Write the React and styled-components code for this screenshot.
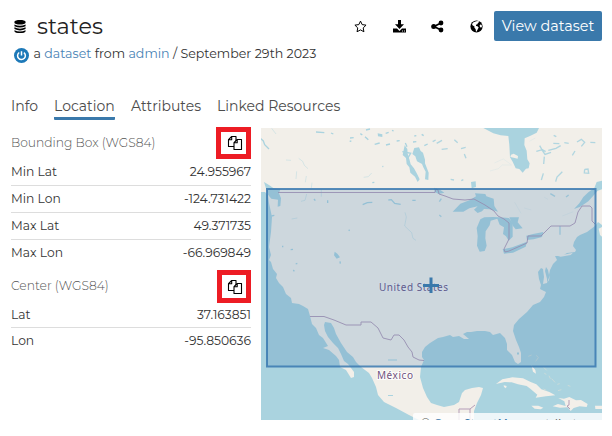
import React from "react";
import styled, { createGlobalStyle } from "styled-components";

const Global = createGlobalStyle`
  * { box-sizing: border-box; }
  body { margin: 0; background: #fff; color: #333; font-family: Montserrat, Inter, "Open Sans", sans-serif; }
`;
const Page = styled.main`
  width: 612px; height: 436px; padding: 11px 10px 0 11px; overflow: hidden;
`;
const Header = styled.header`
  display: flex; height: 30px; align-items: center;
`;
const Title = styled.h1`
  margin: 0 auto 0 11px; font-size: 22.4px; line-height: 30px; font-weight: 400; color: #222;
`;
const Glyph = styled.svg`
  display: block; flex: none; overflow: visible; width: ${(p) => p.$w}px; height: ${(p) => p.$h}px;
  margin-left: ${(p) => p.$left || 0}px; fill: ${(p) => p.$fill || "#000"};
`;
const Actions = styled.div`
  display: flex; align-items: center; gap: 25.5px; margin-right: 12.5px;
`;
const Action = styled.button`
  border: 0; padding: 0; background: none; width: 13px; height: 14px;
`;
const Primary = styled.button`
  width: 108px; height: 30px; border: 0; border-radius: 2px; padding: 0; margin-right: -1px; background: #3a79ab; color: #fff;
  font: 400 14.4px Montserrat, Inter, sans-serif; white-space: nowrap;
  transform: translateX(-1px);
`;
const Byline = styled.div`
  display: flex; align-items: center; height: 20px; margin: 4px 0 0 3px; font-size: 12.6px; white-space: pre;
`;
const BylineText = styled.span`
  margin: 0 0 2px 4.5px; line-height: 18px;
`;
const Link = styled.a`color: #4a83b5;`;
const Tabs = styled.nav`
  display: flex; gap: 16px; margin-top: 31px; height: 24px;
`;
const Tab = styled.a`
  width: ${(p) => p.$w}px; height: 24px; line-height: 20px; font-size: 14px; font-weight: 400; color: #4c4c4c; white-space: nowrap;
  border-bottom: 3px solid ${(p) => (p.$active ? "#3a79ab" : "transparent")};
  border-radius: 1px;
`;
const Body = styled.section`
  display: flex; gap: 10px; margin-top: 8px;
`;
const Facts = styled.div`width: 240px; flex: none;`;
const GroupHead = styled.div`
  display: flex; justify-content: space-between; align-items: center; height: ${(p) => p.$h}px; margin-top: ${(p) => p.$top}px;
  font-size: 12.3px; font-weight: 300; color: #555;
`;
const GroupTitle = styled.span`padding-bottom: 2px; letter-spacing: -0.02px;`;
const CopyButton = styled.button`
  display: flex; align-items: center; justify-content: center; width: ${(p) => p.$w}px; height: ${(p) => p.$h}px;
  border: 5px solid #ed1c24; padding: 0 0 0 2px; background: #fff;
`;
const Row = styled.div`
  display: flex; justify-content: space-between; align-items: center; height: ${(p) => p.$h || 27}px; font-size: 12.3px;
  padding-bottom: 1px; border-bottom: 1px solid ${(p) => (p.$last ? "transparent" : "#ddd")};
`;
const Cell = styled.span`white-space: nowrap;`;
const MapView = styled.svg`display: block; width: 341px; height: 292px; flex: none;`;

const Copy = () => (
  <Glyph $w={14} $h={14} $fill="#fff" viewBox="0 0 14 14">
    <g stroke="#000" strokeWidth="1.1" strokeLinejoin="round">
      <path d="M3.7.5H8v10H.5V3.7zM3.7.5v3.2H.5" />
      <path d="M9.2 3.5h4.3v10H6V6.7zM9.2 3.5v3.2H6" />
    </g>
  </Glyph>
);

const rowsBox = [["Min Lat", "24.955967"], ["Min Lon", "-124.731422"], ["Max Lat", "49.371735"], ["Max Lon", "-66.969849"]];
const rowsCenter = [["Lat", "37.163851", 25], ["Lon", "-95.850636"]];

const Rows = ({ items }) => items.map(([label, value, h], i) => (
  <Row key={label} $h={h} $last={i === items.length - 1}><Cell>{label}</Cell><Cell>{value}</Cell></Row>
));

const MapPanel = () => (
  <MapView viewBox="261 128 341 292" fill="#aad3df">
    <rect x="261" y="128" width="341" height="292" />
    <path fill="#f2efe9" d="M261 128H602V225L598 222 595 226 587 232 580 235 577 237 574 242 573 246 576 250 575 252 567 253 562 256 555 256 557 260 553 264 550 270 549 275 548 270 546 267 545 271 547 279 547 283 550 275 551 270 549 280 547 283 543 284 544 277 543 269 541 268 538 272 539 279 541 285 540 289 546 292 544 297 540 302 533 305 527 312 519 319 514 325 513 331 516 340 519 347 521 353 521 362 518 364 515 362 512 355 507 350 507 344 505 338 500 333 493 335 490 332 485 331 477 331 471 332 467 332 463 334 469 339 464 339 459 336 453 337 450 335 443 337 438 338 430 343 425 347 422 352 422 357 424 360 421 367 420 377 423 388 427 397 431 403 437 405 444 407 454 405 459 402 462 393 465 390 472 388 479 387 483 388 481 395 477 403 474 411 474 420H419L409 415 396 408 384 402 378 395 376 387 372 378 369 373 361 367 356 362 353 357 347 352 341 343 336 334 334 328 331 323 325 322 324 325 325 331 328 337 333 343 338 348 341 354 344 361 348 364 354 372 354 377 351 378 346 370 340 367 339 360 336 356 329 350 323 348 328 346 323 338 319 335 316 328 312 324 310 316 308 309 303 306 299 304 292 303 291 298 286 294 283 287 279 283 276 278 277 274 273 269 271 262 269 260 271 255 269 247 271 232 272 217 269 203 268 195 265 192H261Z" />
    <g transform="translate(430 120) scale(.33333)">
      <path d="M160 24H327L320 38 300 48 284 55 283 75 290 92 292 118 299 130 296 145 288 146 278 158 268 147 257 145 248 125 240 112 238 75 235 48 212 46 190 40Z" />
      <path d="M516 182 500 186 493 204 475 217 460 231 448 250 432 267 451 260 475 244 494 223 503 212 516 208Z" />
      <path d="M68 275 91 251 120 240 138 229 135 220 166 222 169 229 191 236 193 258 204 275 178 268 162 267 156 274 143 279 132 269 143 259 118 265 100 275Z" />
      <path d="M140 324 151 298 163 292 189 291 207 292 237 294 248 309 248 350 236 362 228 349 219 342 222 322 209 314 202 296 182 302 179 316 167 334 166 355 170 377 164 393 149 395 141 377 143 348Z" />
      <path d="M238 292 267 292 263 307 278 325 257 328 249 318ZM218 388 247 382 291 365 287 380 249 398 222 401ZM289 347 309 342 340 336 336 351 311 358 291 360ZM123 186 137 184 138 201 125 205ZM12 203 31 210 43 218 26 222 14 216Z" />
      <path fill="#f2efe9" d="M243 104 251 101 264 108 263 116 251 113 241 111ZM506 326 516 321V350L510 345ZM374 405 408 403 429 398 422 405 392 410Z" />
      <g fill="none" stroke="#aad3df" strokeWidth="4" opacity=".9">
        <path d="M20 70 36 61M35 88 53 86M73 59 83 68M93 86 107 82M103 102 108 115M62 178 72 180M94 182 100 179M8 65 17 60M319 94 337 89 347 95M329 77 337 91 345 103 363 97M355 91 378 85 392 77M370 70 388 71M403 68 416 70M441 66 454 58 464 67 454 79M435 93 427 106M371 46 379 50M377 185 381 171 397 155M464 148 474 147 476 160 463 159 464 148M481 67 496 68M343 110 341 132M361 221 375 229M408 231 416 225M28 285 34 290M28 245 34 236M340 160 334 180M390 318V344" />
      </g>
      <g fill="none" stroke="#aad3df" strokeWidth="1" opacity=".5"><path d="M180 153 205 146 217 135 245 135M193 129 220 117 241 132M298 64 316 54M283 264 304 270M397 288 430 275M254 247 273 280M343 232 354 238" /></g>
    </g>
    <g transform="translate(256 120) scale(.33333)">
      <path d="M475 84 489 82 494 93 501 98 507 119 507 130 518 158 517 180 507 178 509 155 502 142 498 132 483 124 478 109 469 102ZM446 76 454 87 455 101 461 121 464 133 474 145 483 161 491 178 485 186 477 170 463 158 460 142 452 132 450 114 440 105ZM365 40 379 43 379 51 366 49ZM24 186 39 195 53 205 73 207 69 220 75 235 73 258 65 260 66 239 46 236 36 224ZM236 395 244 401 252 412 242 416 234 406Z" />
      <g fill="none" stroke="#aad3df" strokeWidth="4">
        <path d="M180 36 205 38M225 39 232 42M282 54 293 53M281 64 286 63M313 41 319 45M327 50 337 59M356 73 371 69M390 75 402 72M422 63 431 62M439 95 464 100 455 115M448 69 453 80M471 66 481 65M505 77 515 72M497 43 503 47M475 48 481 47M389 40 398 37M330 30 342 27M408 31 413 33M355 187 349 188M379 140 382 139M320 254 334 248 349 247M397 240 406 239 416 250 434 253M469 241 479 241M174 237 178 242M215 241V249M46 288 55 286M80 377V382M104 389 111 388M119 432 124 430M112 450 115 454M252 424 253 431M278 329 281 332M13 55 22 63 26 74 39 87" />
      </g>
      <path fill="none" stroke="#aad3df" strokeWidth="2" opacity=".6" d="M47 25 60 42M90 120 105 121M128 115 140 124 145 136 156 146M122 154 120 177M151 168 148 187M168 188 166 204M107 297 124 294M447 277 451 291 446 318 467 338 471 355 480 361M323 172 337 170 347 159M196 208V230M135 244 147 241 152 222" />
    </g>
    <g fill="#f2efe9" transform="translate(430 270) scale(.33333)">
      <path d="M198 342 217 328 247 322 279 325 302 336 319 343 334 358 358 366 376 376 348 379 317 383 322 374 301 356 290 348 264 343 245 337 224 336ZM221 346 230 348 228 355 222 351ZM304 407 325 407 340 413 332 418 314 416ZM368 409 384 402 407 408 403 394 385 384 402 386 418 381 438 391 453 390 473 402 470 411 449 409 431 414 422 423 413 412 390 413ZM495 407H516V417H496ZM304 285 316 300 318 311 309 305Z" />
      <path fill="none" stroke="#d9ded6" strokeWidth="2" d="M295 259 305 255M319 256 325 263 317 274M340 291 350 301M343 310 349 313M357 317 361 326M365 326 375 337M382 343 389 341M413 346 421 349M384 362 394 359M340 357 349 361" />
    </g>
    <path d="M517 352.500h2v2h-2zM388 359.500h9v1h-9zM388 395h5v1h-5z" />
    <g fill="none" stroke="#ab91b0" strokeWidth="1" opacity=".85">
      <path d="M278 192.500H435L436 189 438 190 439 194 445 196 453 199 465 200 474 199 485 205 494 211 498 216 504 219 509 223 509 239 504 249 505 252 509 251 518 247 527 243 528 236 541 236 551 226H570L575 223 578 212 582 206 590 206 592 208 592 221 595 224" />
      <path d="M310 316.500H324L334 320 346 325H361V322H371L378 328 383 338 391 340 394 335H399L404 340 408 347 412 352 413 357 419 360 424 360.500M459 420V409H470V420M470 409 475 405M569 400V405L567 406 570 409" />
    </g>
    <text x="379" y="291" fill="#695582" stroke="#f5f3f7" strokeOpacity=".65" strokeWidth="2" paintOrder="stroke" fontFamily="Noto Sans" fontSize="10" textLength="69">United States</text>
    <text x="377" y="379" fill="#71527e" stroke="#fff" strokeOpacity=".85" strokeWidth="2" paintOrder="stroke" fontFamily="Noto Sans" fontSize="10" textLength="36">México</text>
    <rect x="267" y="189" width="328.500" height="177.500" fill="#3a79b0" fillOpacity=".2" stroke="#3a79b0" strokeOpacity=".85" strokeWidth="2" />
    <path fill="#3a79ab" d="M429.500 277.500h3v6.500h6.500v3h-6.500v6h-3v-6h-6.500v-3h6.500z" />
    <path fill="#fff" fillOpacity=".8" d="M415 413H602V420H413V415Q413 413 415 413Z" />
    <text x="421" y="427" fill="#555" fontFamily="Noto Sans" fontSize="11" textLength="177">© <tspan fill="#3a79ab">OpenStreetMap</tspan> contributors.</text>
  </MapView>
);

export default function App() {
  return (
    <Page><Global />
      <Header>
        <Glyph $w={12} $h={13} $left={3} viewBox="0 0 12 14">
          <path d="M0 2C0-.7 12-.7 12 2v1C12 5.500 0 5.500 0 3zM0 4.800q6 3 12 0v1.800Q6 9.500 0 6.600zM0 7.900q6 3 12 0v1.800q-6 3.200-12 0zM0 11q6 3 12 0v1c0 2.700-12 2.700-12 0z" />
        </Glyph>
        <Title>states</Title>
        <Actions>
          <Action><Glyph $w={13} $h={13} viewBox="0 0 13 13"><path fill="none" stroke="#000" d="m6.500 1.100 1.650 3.500 3.900.55-2.850 2.750.7 3.850-3.400-1.850-3.450 1.850.7-3.850L.9 5.150l3.950-.55z" /></Glyph></Action>
          <Action><Glyph $w={13} $h={13} viewBox="0 0 13 13"><path d="M5 0h3v4.300h3L6.500 9 2 4.300h3zM0 8.600h4l2.500 2.300L9 8.600h4v3.900H0zm9 2v.9h.9v-.9zm2 0v.9h.9v-.9z" fillRule="evenodd" /></Glyph></Action>
          <Action><Glyph $w={13} $h={13} viewBox="0 0 13 13"><path d="M10 3 3 6.500l7 3.500" fill="none" stroke="#000" strokeWidth="1.700" /><circle cx="10" cy="3" r="2.400" /><circle cx="2.700" cy="6.500" r="2.500" /><circle cx="10" cy="10" r="2.400" /></Glyph></Action>
          <Action><Glyph $w={13} $h={13} viewBox="0 0 13 13"><circle cx="6.500" cy="6.500" r="6.100" /><path fill="#fff" d="M6.200 1.200 8.500 1l.7 1.100-1.300.9-.5 1.200-1.500.6.2 1.200 1.400.3 1.200 1.200-.8 1.500-1.300 2.600-.6.1-.4-2.600-1.200-1.400.1-1.200-2-1.300L2 4l1.500-1.800zM10.400 4.500l1.200.2.4 1.800-.9 1.200-1.100-.7-.4-1.400z" /></Glyph></Action>
        </Actions>
        <Primary>View dataset</Primary>
      </Header>
      <Byline>
        <Glyph $w={15} $h={15} viewBox="0 0 15 15"><circle cx="7.500" cy="7.500" r="7.500" fill="#1d79b8" /><path d="M7.500 3.300v4.300M5.200 4.500a3.900 3.900 0 1 0 4.700.1" fill="none" stroke="#fff" strokeWidth="1.500" /></Glyph>
        <BylineText>a <Link>dataset</Link> from <Link>admin</Link> / September 29th 2023</BylineText>
      </Byline>
      <Tabs>
        <Tab $w={27}>Info</Tab><Tab $w={61} $active>Location</Tab>
        <Tab $w={70}>Attributes</Tab><Tab $w={124}>Linked Resources</Tab>
      </Tabs>
      <Body>
        <Facts>
          <GroupHead $top={-1} $h={32}><GroupTitle>Bounding Box (WGS84)</GroupTitle><CopyButton $w={35} $h={32}><Copy /></CopyButton></GroupHead>
          <Rows items={rowsBox} />
          <GroupHead $top={3} $h={33}><GroupTitle>Center (WGS84)</GroupTitle><CopyButton $w={34} $h={33}><Copy /></CopyButton></GroupHead>
          <Rows items={rowsCenter} />
        </Facts>
        <MapPanel />
      </Body>
    </Page>
  );
}
